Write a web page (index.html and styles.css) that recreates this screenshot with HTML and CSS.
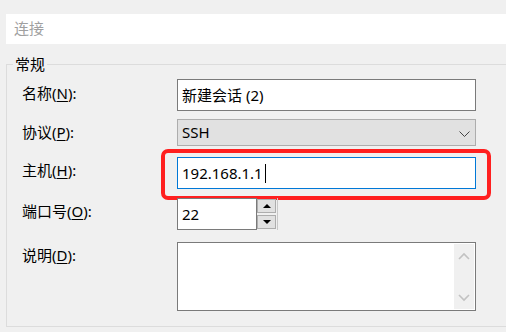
FILE: index.html
```html
<!DOCTYPE html>
<html>
<head>
  <meta charset="utf-8">
  <link rel="stylesheet" href="styles.css">
</head>
<body>
  <div class="search-bar">连接</div>

  <fieldset class="group">
    <legend>常规</legend>

    <div class="row row-name">
      <label class="label">名称(<u>N</u>):</label>
      <div class="textbox">新建会话 (2)</div>
    </div>

    <div class="row row-proto">
      <label class="label">协议(<u>P</u>):</label>
      <div class="combo">
        <span>SSH</span>
        <svg class="chevron" width="11" height="7" viewBox="0 0 11 7">
          <path d="M0.5 0.5 L5.5 5.5 L10.5 0.5" fill="none" stroke="#444" stroke-width="1"/>
        </svg>
      </div>
    </div>

    <div class="row row-host">
      <label class="label">主机(<u>H</u>):</label>
      <div class="textbox focused">192.168.1.1<span class="caret"></span></div>
      <div class="highlight"></div>
    </div>

    <div class="row row-port">
      <label class="label">端口号(<u>O</u>):</label>
      <div class="textbox port">22</div>
      <div class="spinner">
        <div class="spin-btn"><span class="tri-up"></span></div>
        <div class="spin-btn"><span class="tri-down"></span></div>
      </div>
    </div>

    <div class="row row-desc">
      <label class="label">说明(<u>D</u>):</label>
      <div class="textarea">
        <div class="scrollbar">
          <svg width="12" height="8" viewBox="0 0 12 8">
            <path d="M1 7 L6 2 L11 7" fill="none" stroke="#c2c2c2" stroke-width="1.6"/>
          </svg>
          <svg width="12" height="8" viewBox="0 0 12 8">
            <path d="M1 1 L6 6 L11 1" fill="none" stroke="#c2c2c2" stroke-width="1.6"/>
          </svg>
        </div>
      </div>
    </div>
  </fieldset>
</body>
</html>
```

FILE: styles.css
```css
body {
  margin: 0;
  background: #f0f0f0;
  font-family: "Noto Sans", "Noto Sans CJK SC", sans-serif;
  font-size: 15px;
  line-height: 20px;
  color: #000;
  overflow: hidden;
  width: 506px;
  height: 332px;
}

.search-bar {
  margin: 14px 0 0 6px;
  height: 30px;
  background: #fff;
  color: #a0a0a0;
  padding-left: 8px;
  line-height: 28px;
}

.group {
  margin: 10px 0 0 6px;
  padding: 0 0 15px 6px;
  width: 520px;
  border: 1px solid #dcdcdc;
  box-sizing: border-box;
}

.group legend {
  padding: 0 2px;
  line-height: 20px;
}

.row {
  position: relative;
  display: flex;
}

.row-name { margin-top: 5px; }
.row-proto { margin-top: 8px; }
.row-host { margin-top: 11px; }
.row-port { margin-top: 9px; }
.row-desc { margin-top: 12px; }

.label {
  width: 164px;
  padding: 3px 0 0 9px;
  box-sizing: border-box;
  flex-shrink: 0;
}

.label u {
  text-underline-offset: 2px;
}

.row-name .label { padding-top: 4px; }
.row-desc .label { padding-top: 3px; }

.textbox {
  width: 299px;
  height: 32px;
  box-sizing: border-box;
  border: 1px solid #7a7a7a;
  background: #fff;
  padding: 5px 0 0 4px;
  white-space: nowrap;
}

.textbox.focused {
  border-color: #0078d7;
}

.caret {
  display: inline-block;
  width: 1px;
  height: 19px;
  background: #000;
  margin-left: 2px;
  vertical-align: -4px;
}

.combo {
  width: 299px;
  height: 27px;
  box-sizing: border-box;
  border: 1px solid #adadad;
  background: #e1e1e1;
  padding: 2px 0 0 4px;
  display: flex;
  justify-content: space-between;
}

.combo .chevron {
  margin: 9px 5px 0 0;
}

.highlight {
  position: absolute;
  left: 148px;
  top: -8px;
  width: 330px;
  height: 51px;
  box-sizing: border-box;
  border: 4px solid #ff1f1f;
  border-radius: 7px;
}

.textbox.port {
  width: 80px;
}

.spinner {
  width: 21px;
  height: 32px;
  box-sizing: border-box;
  padding: 1px 1px 1px 0;
  border-right: 1px solid #c8c8c8;
  display: flex;
  flex-direction: column;
  gap: 2px;
}

.spin-btn {
  flex: 1;
  background: #e1e1e1;
  border: 1px solid #adadad;
  display: flex;
  align-items: center;
  justify-content: center;
}

.tri-up {
  width: 0;
  height: 0;
  border-left: 4px solid transparent;
  border-right: 4px solid transparent;
  border-bottom: 4px solid #000;
}

.tri-down {
  width: 0;
  height: 0;
  border-left: 4px solid transparent;
  border-right: 4px solid transparent;
  border-top: 4px solid #000;
}

.textarea {
  width: 299px;
  height: 69px;
  box-sizing: border-box;
  border: 1px solid #7a7a7a;
  background: #fff;
  display: flex;
  justify-content: flex-end;
  padding: 1px;
}

.scrollbar {
  width: 20px;
  background: #f0f0f0;
  display: flex;
  flex-direction: column;
  justify-content: space-between;
  align-items: center;
  padding: 8px 0 7px;
  box-sizing: border-box;
}
```
